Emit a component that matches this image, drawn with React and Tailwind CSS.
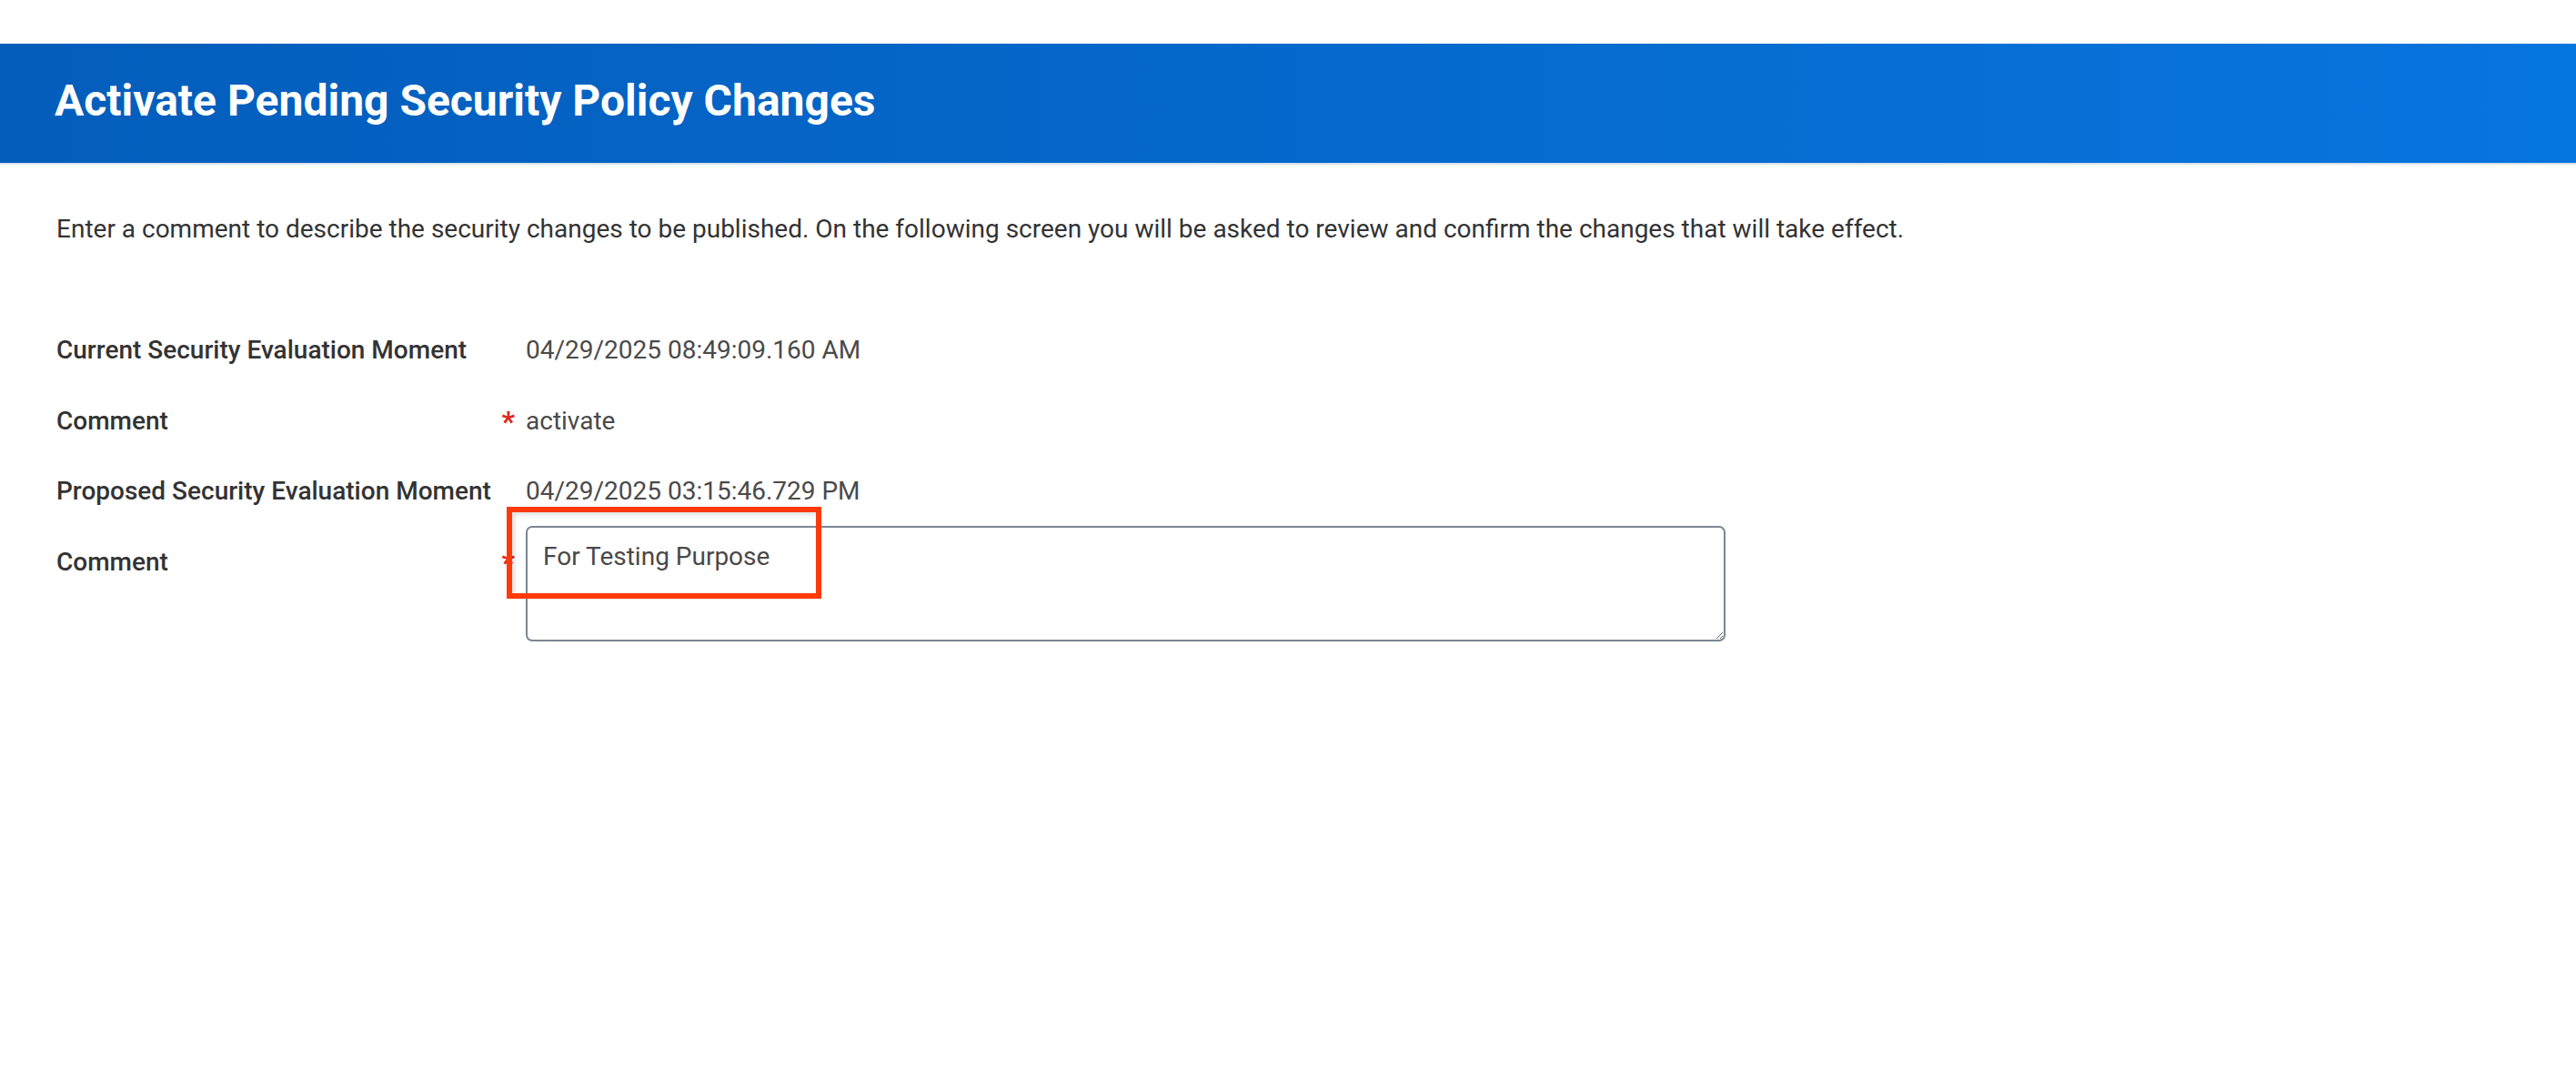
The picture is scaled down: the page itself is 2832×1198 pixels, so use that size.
import React from "react";

const Row = ({ label, required, children, className = "" }) => (
  <div className={`flex items-start ${className}`}>
    <div className="w-[483px] shrink-0 text-[28px] leading-[36px] font-medium text-[#333333]">{label}</div>
    <div className="w-[33px] shrink-0 flex justify-end pr-[12px]">
      {required ? (
        <span className="text-[32px] leading-[36px] font-bold text-[#e0261d]">*</span>
      ) : null}
    </div>
    <div className="text-[28px] leading-[36px] text-[#4a4a4a]">{children}</div>
  </div>
);

export default function App() {
  return (
    <div className="w-[2832px] h-[1198px] bg-white" style={{ fontFamily: "Roboto, 'Liberation Sans', sans-serif" }}>
      <div className="h-[48px]" />
      <div className="h-[131px] bg-gradient-to-r from-[#045dbb] to-[#0775de] flex items-center pl-[60px]">
        <h1 className="text-white font-bold text-[48px] leading-[56px] -mt-[6px]">Activate Pending Security Policy Changes</h1>
      </div>
      <div className="h-[2px] bg-[#dae2ea]" />
      <div className="pl-[62px]">
        <p className="mt-[53px] text-[28px] leading-[36px] text-[#333333]">
          Enter a comment to describe the security changes to be published. On the following screen you will be asked to review and confirm the changes that will take effect.
        </p>
        <div className="mt-[97px]">
          <Row label="Current Security Evaluation Moment">04/29/2025 08:49:09.160 AM</Row>
          <Row label="Comment" required className="mt-[42px]">activate</Row>
          <Row label="Proposed Security Evaluation Moment" className="mt-[41px]">04/29/2025 03:15:46.729 PM</Row>
          <div className="flex items-start mt-[20px]">
            <div className="w-[483px] shrink-0 pt-[22px] text-[28px] leading-[36px] font-medium text-[#333333]">Comment</div>
            <div className="w-[33px] shrink-0 flex justify-end pr-[12px] pt-[22px]">
              <span className="text-[32px] leading-[36px] font-bold text-[#e0261d]">*</span>
            </div>
            <div className="relative">
              <textarea
                defaultValue="For Testing Purpose"
                className="block w-[1319px] h-[127px] border-2 border-[#7b8692] rounded-[7px] pt-[14px] px-[17px] text-[28px] leading-[36px] text-[#494949] bg-white outline-none resize"
                style={{ fontFamily: "Roboto, 'Liberation Sans', sans-serif" }}
              />
              <div className="absolute left-[-21px] top-[-21px] w-[346px] h-[101px] border-[6px] border-[#ff3a0a] pointer-events-none shadow-[inset_3px_3px_4px_rgba(0,0,0,0.12)]" />
            </div>
          </div>
        </div>
      </div>
    </div>
  );
}
